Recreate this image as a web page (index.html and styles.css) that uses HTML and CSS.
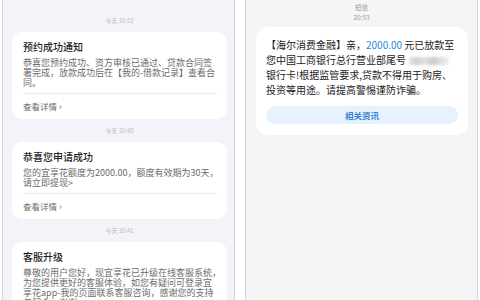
FILE: index.html
```html
<!DOCTYPE html>
<html lang="zh-CN">
<head>
<meta charset="utf-8">
<link rel="stylesheet" href="styles.css">
</head>
<body>
<div class="screens">
  <section class="phone phone-left">
    <div class="stamp">今天 20:52</div>
    <article class="notice">
      <h2 class="notice-title">预约成功通知</h2>
      <p class="notice-body">恭喜您预约成功、资方审核已通过、贷款合同签<br>署完成，放款成功后在【我的-借款记录】查看合<br>同。</p>
      <div class="notice-link">查看详情<span class="chev">›</span></div>
    </article>
    <div class="stamp">今天 20:45</div>
    <article class="notice">
      <h2 class="notice-title">恭喜您申请成功</h2>
      <p class="notice-body">您的宜享花额度为2000.00，额度有效期为30天，<br>请立即提现&gt;</p>
      <div class="notice-link">查看详情<span class="chev">›</span></div>
    </article>
    <div class="stamp">今天 20:41</div>
    <article class="notice">
      <h2 class="notice-title">客服升级</h2>
      <p class="notice-body">尊敬的用户您好，现宜享花已升级在线客服系统，<br>为您提供更好的客服体验，如您有疑问可登录宜<br>享花app-我的页面联系客服咨询，感谢您的支持<br>与配合，谢谢。</p>
    </article>
  </section>
  <section class="phone phone-right">
    <div class="sms-head">
      <div>短信</div>
      <div>20:53</div>
    </div>
    <article class="sms">
      <p class="sms-text">【海尔消费金融】亲，<span class="amount">2000.00</span> 元已放款至<br>您中国工商银行总行营业部尾号<span class="masked"></span><br>银行卡!根据监管要求,贷款不得用于购房、<br>投资等用途。请提高警惕谨防诈骗。</p>
      <div class="sms-btn">相关资讯</div>
    </article>
  </section>
</div>
</body>
</html>
```

FILE: styles.css
```css
* { box-sizing: border-box; }

html, body {
  margin: 0;
  padding: 0;
  background: #ffffff;
}

body {
  font-family: "Noto Sans CJK SC", "Noto Sans", sans-serif;
  width: 480px;
  height: 300px;
  overflow: hidden;
}

.screens {
  display: flex;
  gap: 10px;
  padding-left: 2px;
  height: 300px;
}

.phone {
  width: 233px;
  height: 300px;
  overflow: hidden;
  border-left: 1px solid #d6d6da;
  border-right: 1px solid #d6d6da;
}

.phone-left {
  background: #f3f4f9;
  padding-top: 9px;
}

.phone-right {
  background: #f5f5f5;
}

.stamp {
  padding: 6px 0 5px;
  height: 23px;
  line-height: 12px;
  font-size: 6px;
  color: #b9bac0;
  text-align: center;
  padding-left: 2px;
}

.notice {
  margin: 0 7px 0 9px;
  background: #ffffff;
  border-radius: 10px;
  padding: 8px 10px 0 11px;
}

.notice-title {
  margin: 0;
  font-size: 10px;
  line-height: 14px;
  font-weight: 500;
  color: #1f1f1f;
}

.notice-body {
  margin: 4px 0 0;
  padding-bottom: 5px;
  font-size: 9px;
  line-height: 10px;
  color: #6b6b6b;
  white-space: nowrap;
  border-bottom: 1px solid #ebebeb;
}

.notice-link {
  padding: 6px 0;
  font-size: 8.5px;
  line-height: 12px;
  color: #6b6b6b;
}

.chev {
  margin-left: 2px;
  font-size: 9px;
}

.sms-head {
  padding-top: 2px;
  margin-bottom: 5px;
  font-size: 6.5px;
  line-height: 10px;
  color: #9a9a9a;
  text-align: center;
}

.sms {
  margin: 0 9px 0 10px;
  background: #ffffff;
  border-radius: 12px;
  padding: 10px 10px 11px;
}

.sms-text {
  margin: 0;
  font-size: 10px;
  line-height: 15px;
  color: #222222;
  white-space: nowrap;
}

.amount {
  color: #2b86e3;
}

.masked {
  display: inline-block;
  width: 40px;
  height: 8px;
  margin-left: 3px;
  vertical-align: -1px;
  background: linear-gradient(90deg, #e4e4e4 0%, #cfcfcf 20%, #e2e2e2 40%, #c9c9c9 60%, #dedede 80%, #eeeeee 100%);
  filter: blur(1.5px);
}

.sms-btn {
  margin-top: 9px;
  height: 18px;
  border-radius: 9px;
  background: #e6f2fd;
  color: #3a83d3;
  font-size: 8.5px;
  font-weight: 700;
  line-height: 18px;
  text-align: center;
}
```
